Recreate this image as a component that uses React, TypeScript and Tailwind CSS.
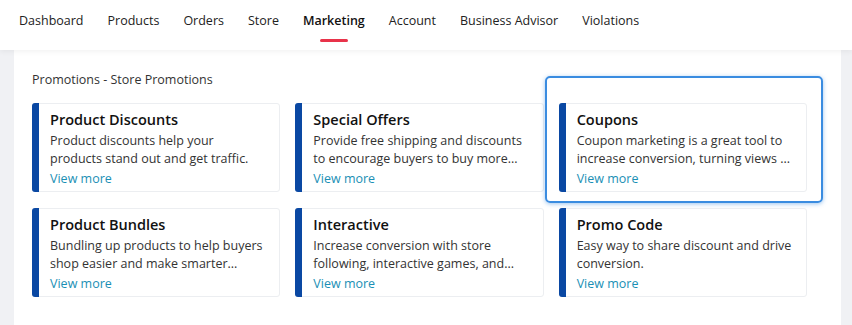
import React from 'react';

const tabs = ['Dashboard', 'Products', 'Orders', 'Store', 'Marketing', 'Account', 'Business Advisor', 'Violations'];

const promos = [
  { title: 'Product Discounts', desc: 'Product discounts help your products stand out and get traffic.' },
  { title: 'Special Offers', desc: 'Provide free shipping and discounts to encourage buyers to buy more...' },
  { title: 'Coupons', desc: 'Coupon marketing is a great tool to increase conversion, turning views ...', highlight: true },
  { title: 'Product Bundles', desc: 'Bundling up products to help buyers shop easier and make smarter...' },
  { title: 'Interactive', desc: 'Increase conversion with store following, interactive games, and...' },
  { title: 'Promo Code', desc: 'Easy way to share discount and drive conversion.' },
];

function PromoCard({ title, desc, highlight }: { title: string; desc: string; highlight?: boolean }) {
  return (
    <div className="relative">
      {highlight && (
        <div className="absolute -left-[14px] -top-[27px] -right-[16px] -bottom-[11px] rounded-[5px] border-2 border-[#3a8ce0] shadow-[0_1px_4px_rgba(58,140,224,0.5)]" />
      )}
      <div className="relative flex h-[89px] rounded-[3px] border border-[#eceef1] bg-white">
        <div className="-my-px -ml-px w-[7px] shrink-0 rounded-l-[3px] bg-[#0a48a3]" />
        <div className="pl-[11px] pr-3 pt-[5px]">
          <h3 className="text-[14.5px] font-semibold leading-[22px] text-[#111]">{title}</h3>
          <p className="mt-px text-[12.5px] leading-[18px] text-[#333]">{desc}</p>
          <a className="block text-[12.5px] leading-[22px] text-[#1a8fb5]">View more</a>
        </div>
      </div>
    </div>
  );
}

export default function App() {
  return (
    <div className="h-[325px] w-[852px] overflow-hidden bg-[#f0f1f4] font-['Open_Sans',sans-serif]">
      {/* Top nav */}
      <div className="relative z-10 flex h-[50px] items-start gap-6 bg-white pl-[19px] pt-[11px] shadow-[0_2px_5px_rgba(0,0,0,0.05)]">
        {tabs.map((t) => (
          <div key={t} className="flex flex-col items-center">
            <span className={t === 'Marketing' ? 'text-[12.5px] font-semibold leading-5 text-[#111]' : 'text-[12.5px] leading-5 text-[#222]'}>
              {t}
            </span>
            {t === 'Marketing' && <span className="mt-[8px] h-[3px] w-[28px] rounded-full bg-[#e8334a]" />}
          </div>
        ))}
      </div>

      {/* Content */}
      <div className="ml-[14px] h-full w-[827px] bg-white pl-[18px] pt-[21px]">
        <p className="text-[12.5px] leading-[18px] text-[#333]">Promotions - Store Promotions</p>
        <div className="mt-[14px] grid w-[775px] grid-cols-3 gap-x-[15px] gap-y-[16px]">
          {promos.map((p) => (
            <PromoCard key={p.title} {...p} />
          ))}
        </div>
      </div>
    </div>
  );
}
